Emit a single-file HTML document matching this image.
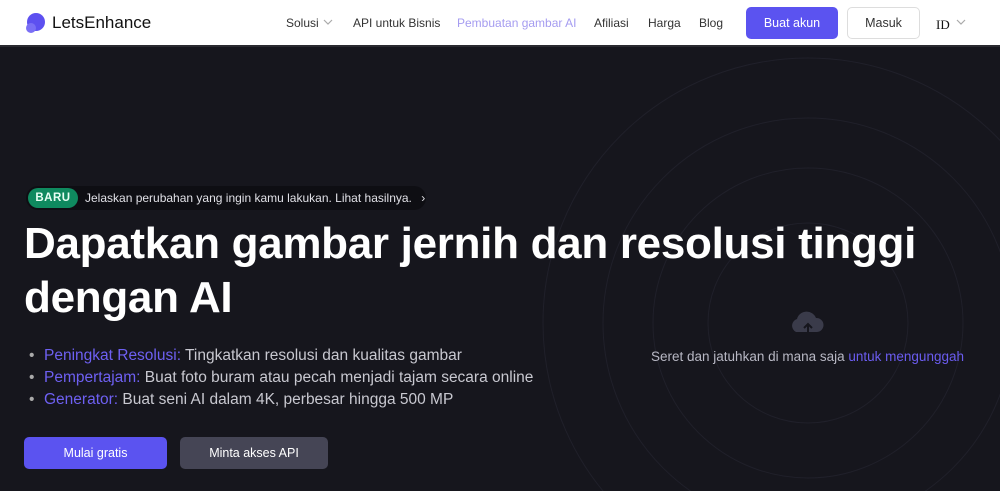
<!DOCTYPE html>
<html style="overflow:hidden"><head><meta charset="utf-8"><style>
*{margin:0;padding:0;box-sizing:border-box}
body{width:1000px;height:491px;overflow:hidden;background:#16161d;font-family:"Liberation Sans",sans-serif;position:relative}
.hdr{position:absolute;left:0;top:0;width:1000px;height:47px;background:#fff;border-bottom:2px solid #2a2a30}
.hdr span{position:absolute;top:16px;font-size:12px;color:#333}
.btn{position:absolute;border-radius:5px;font-size:12.5px;text-align:center}
.bul{position:absolute;left:30px;font-size:15.5px;color:#c8c8d0;white-space:nowrap}
.bul b{font-weight:normal;color:#6e60f2}
.bul:before{content:"•";position:absolute;left:-1px;color:#aaa}
.bul i{font-style:normal;margin-left:14px}
</style></head><body>
<svg style="position:absolute;left:0;top:48px" width="1000" height="443"><g fill="none" stroke="#20202a" stroke-width="1"><circle cx="808" cy="275" r="100"/><circle cx="808" cy="275" r="155"/><circle cx="808" cy="275" r="205"/><circle cx="808" cy="275" r="265"/></g>
<path d="M796 284 a7 7 0 0 1 1-13 a10 10 0 0 1 19-1 a7 7 0 0 1 1 14 z" fill="#3a3b4a"/><path d="M808 286 v-9 M804 280 l4-4 4 4" stroke="#16161d" stroke-width="2" fill="none"/></svg>
<div class="hdr">
<svg style="position:absolute;left:24px;top:12px" width="22" height="22"><circle cx="12" cy="10" r="9" fill="#5d50f0"/><circle cx="7" cy="16" r="5" fill="#7a6ff5"/></svg>
<span style="left:52px;top:13px;font-size:17px;color:#111">LetsEnhance</span>
<span style="left:286px">Solusi</span>
<svg style="position:absolute;left:323px;top:19px" width="10" height="7"><path d="M1 1l4 4 4-4" stroke="#aaa" fill="none" stroke-width="1.2"/></svg>
<span style="left:353px">API untuk Bisnis</span>
<span style="left:457px;color:#a59cf0">Pembuatan gambar AI</span>
<span style="left:594px">Afiliasi</span>
<span style="left:648px">Harga</span>
<span style="left:699px">Blog</span>
<div class="btn" style="left:746px;top:7px;width:92px;height:32px;background:#5b53f0;color:#fff;line-height:32px">Buat akun</div>
<div class="btn" style="left:847px;top:7px;width:73px;height:32px;border:1px solid #ddd;color:#333;line-height:30px">Masuk</div>
<span style="left:936px;top:17px;font-family:'Liberation Serif',serif;color:#111;font-size:13px">ID</span>
<svg style="position:absolute;left:956px;top:19px" width="10" height="7"><path d="M1 1l4 4 4-4" stroke="#aaa" fill="none" stroke-width="1.2"/></svg>
</div>
<div style="position:absolute;left:26px;top:186px;width:400px;height:24px;border-radius:12px;background:#0e0e13"></div>
<div style="position:absolute;left:28px;top:188px;width:50px;height:20px;border-radius:10px;background:#0f8a5f;color:#e8fff4;font-size:11.5px;font-weight:bold;text-align:center;line-height:20px;letter-spacing:.5px">BARU</div>
<div style="position:absolute;left:85px;top:191px;font-size:12px;color:#e0e0e6">Jelaskan perubahan yang ingin kamu lakukan. Lihat hasilnya. <span style="margin-left:6px">›</span></div>
<div style="position:absolute;left:24px;top:217px;font-size:44px;font-weight:bold;color:#fff;line-height:54px;letter-spacing:-.3px;white-space:nowrap">Dapatkan gambar jernih dan resolusi tinggi<br>dengan AI</div>
<div class="bul" style="top:347px"><i><b>Peningkat Resolusi:</b> Tingkatkan resolusi dan kualitas gambar</i></div>
<div class="bul" style="top:369px"><i><b>Pempertajam:</b> Buat foto buram atau pecah menjadi tajam secara online</i></div>
<div class="bul" style="top:391px"><i><b>Generator:</b> Buat seni AI dalam 4K, perbesar hingga 500 MP</i></div>
<div class="btn" style="left:24px;top:437px;width:143px;height:32px;background:#5b53f0;color:#fff;line-height:32px">Mulai gratis</div>
<div class="btn" style="left:180px;top:437px;width:148px;height:32px;background:#454555;color:#fff;line-height:32px">Minta akses API</div>
<div style="position:absolute;left:651px;top:349px;font-size:13.5px;color:#b8b8c4;white-space:nowrap">Seret dan jatuhkan di mana saja <span style="color:#6b5cf0">untuk mengunggah</span></div>
</body></html>
